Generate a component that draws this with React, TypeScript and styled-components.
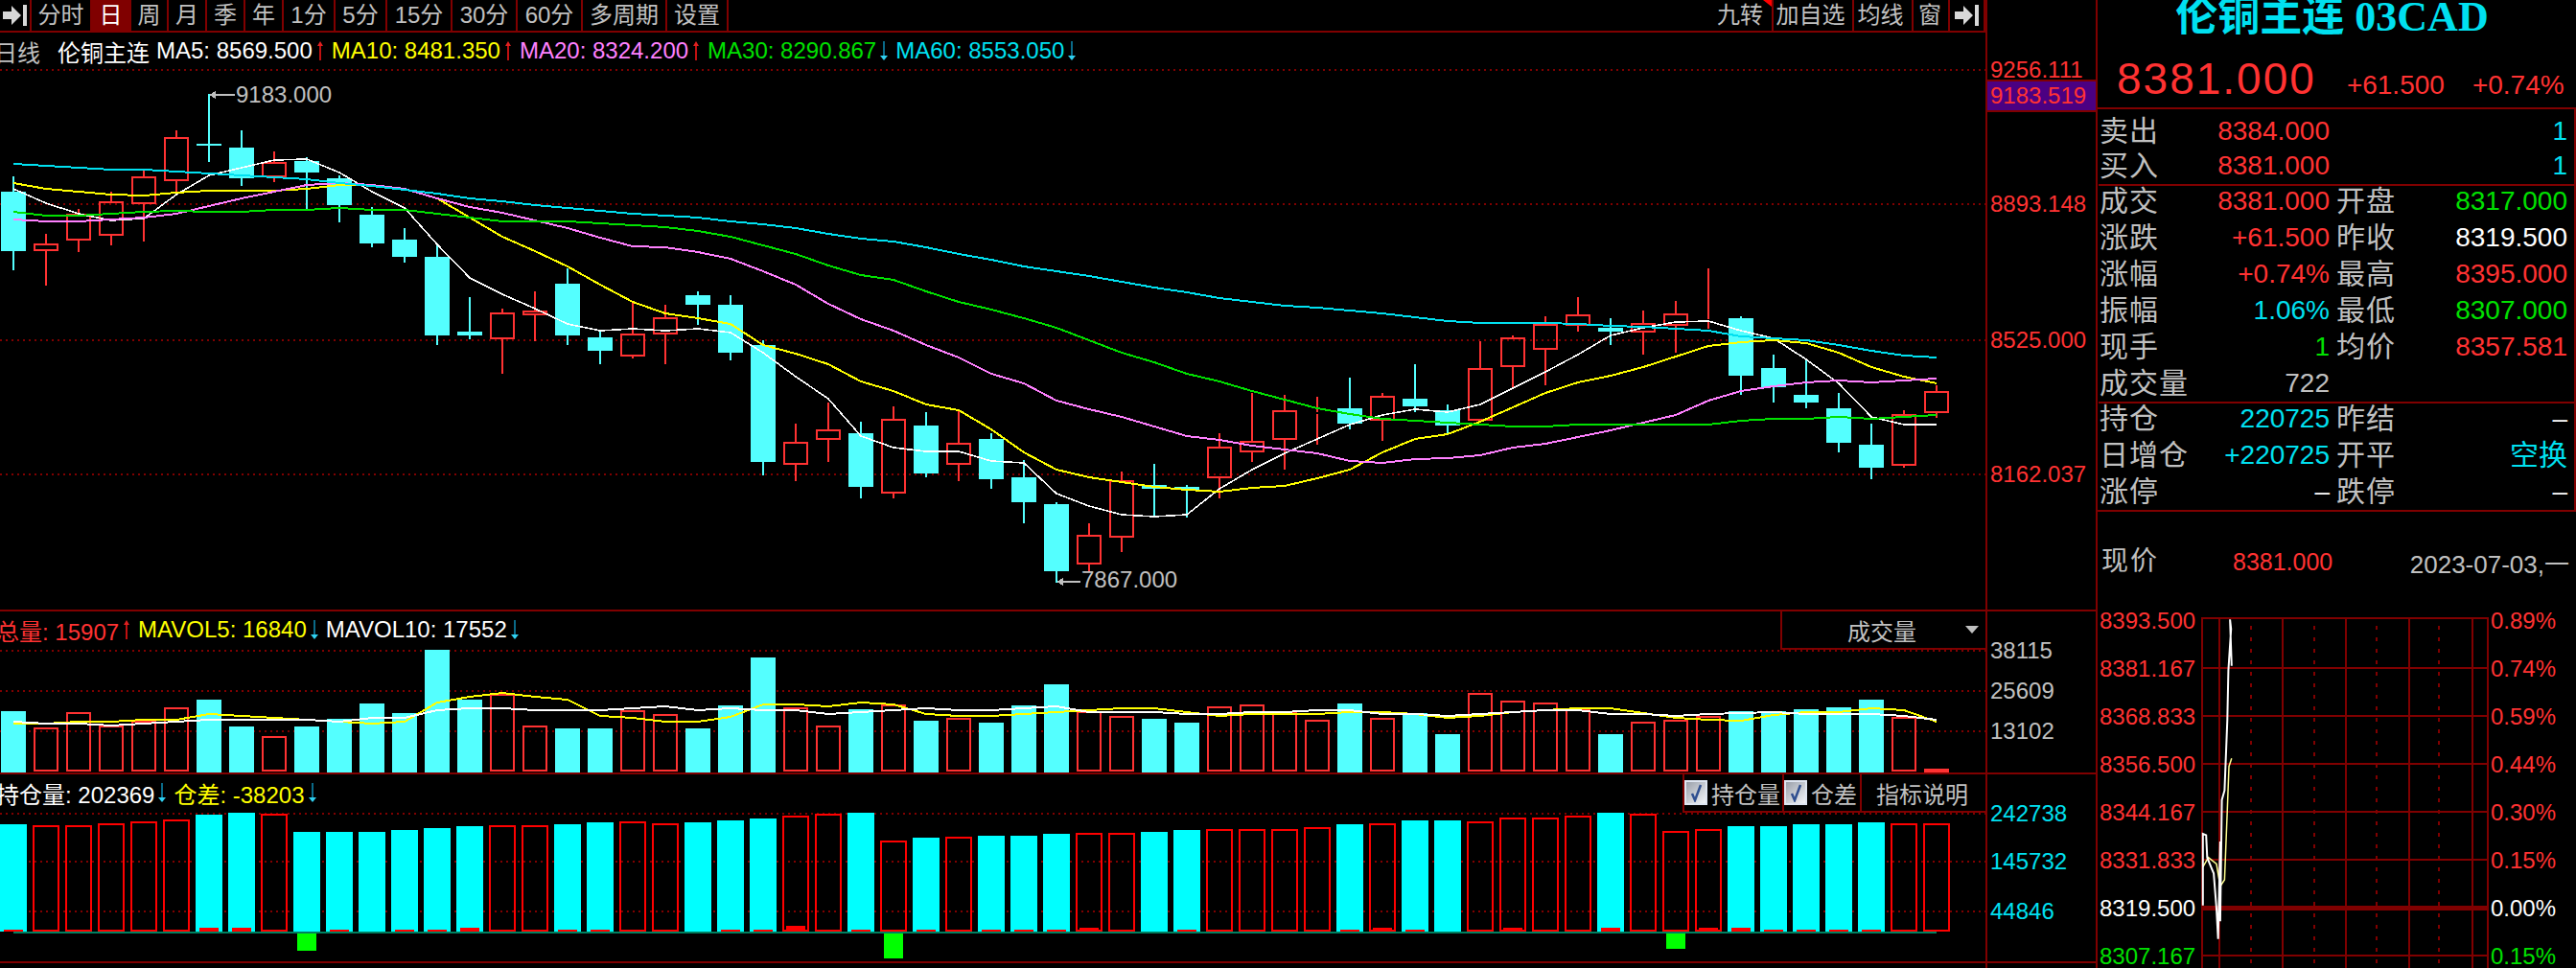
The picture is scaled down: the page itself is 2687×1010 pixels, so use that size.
import React from "react";
import styled, { createGlobalStyle } from "styled-components";

const SANS = `"Liberation Sans", "Noto Sans CJK SC", sans-serif`;
const LINE = "#800000";
const RED = "#ff3232";
const GRAY = "#c0c0c0";
const AQUA = "#00e0f0";
const GREEN = "#00e000";
const WHITE = "#ffffff";
const YELLOW = "#ffff00";
const PINK = "#ff80ff";

const Global = createGlobalStyle`
  html, body { margin: 0; padding: 0; background: #000; overflow: hidden; }
  #root { width: 2687px; height: 1010px; }
`;

const Screen = styled.div`
  width: 2687px;
  height: 1010px;
  display: flex;
  overflow: hidden;
  background: #000;
  color: ${GRAY};
  font-family: ${SANS};
  font-size: 24px;
`;

const LeftArea = styled.div`
  width: 2186px;
  flex: none;
  display: flex;
  flex-direction: column;
`;

const PaneRow = styled.div<{ $h: number }>`
  display: flex;
  height: ${(p) => p.$h}px;
  flex: none;
  box-sizing: border-box;
  border-bottom: 2px solid ${LINE};
`;

const ChartColumn = styled.div`
  width: 2071px;
  flex: none;
  display: flex;
  flex-direction: column;
  overflow: hidden;
`;

const AxisColumn = styled.div`
  width: 115px;
  flex: none;
  box-sizing: border-box;
  border-left: 2px solid ${LINE};
  display: flex;
  flex-direction: column;
`;

const FillerRow = styled.div`
  flex: 1;
  display: flex;
`;

const FillerLeft = styled.div`
  width: 2071px;
  flex: none;
`;

const AxisLabel = styled.div<{ $gap: number; $color: string }>`
  margin-top: ${(p) => p.$gap}px;
  height: 24px;
  line-height: 24px;
  padding-left: 3px;
  color: ${(p) => p.$color};
  white-space: nowrap;
`;

const CurrentBox = styled.div`
  margin-top: -2px;
  height: 34px;
  box-sizing: border-box;
  border-top: 2px solid ${LINE};
  border-bottom: 2px solid ${LINE};
  background: #4b0082;
  color: ${RED};
  line-height: 30px;
  padding-left: 3px;
`;

const Toolbar = styled.div`
  height: 34px;
  flex: none;
  display: flex;
  box-sizing: border-box;
  border-bottom: 2px solid ${LINE};
`;

const ToolSpacer = styled.div`
  flex: 1;
`;

const ToolButton = styled.div<{ $w: number; $active?: boolean; $nudge?: number }>`
  position: relative;
  width: ${(p) => p.$w}px;
  flex: none;
  box-sizing: border-box;
  border-right: 2px solid ${LINE};
  padding-right: ${(p) => p.$nudge ?? 0}px;
  display: flex;
  align-items: center;
  justify-content: center;
  background: ${(p) => (p.$active ? "#800000" : "transparent")};
  color: ${(p) => (p.$active ? "#ffffff" : GRAY)};
  font-size: 24px;
  line-height: 32px;
  white-space: nowrap;
`;

const CornerMark = styled.span`
  position: absolute;
  top: 0;
  right: 0;
  width: 0;
  height: 0;
  border-top: 7px solid #ff0000;
  border-left: 9px solid transparent;
`;

const LegendRow = styled.div<{ $h: number; $clip: number }>`
  height: ${(p) => p.$h}px;
  flex: none;
  display: flex;
  align-items: center;
  gap: 7px;
  margin-left: ${(p) => p.$clip}px;
  white-space: nowrap;
`;

const HeaderRow = styled.div`
  height: 40px;
  flex: none;
  display: flex;
  justify-content: space-between;
`;

const LegendItem = styled.span<{ $color: string; $after?: number }>`
  display: inline-flex;
  align-items: center;
  gap: 3px;
  color: ${(p) => p.$color};
  margin-right: ${(p) => p.$after ?? 0}px;
  font-size: 24px;
`;

const Dropdown = styled.div`
  width: 214px;
  height: 40px;
  flex: none;
  box-sizing: border-box;
  border-left: 2px solid ${LINE};
  border-bottom: 2px solid ${LINE};
  display: flex;
  align-items: center;
  padding-left: 68px;
`;

const DropdownCaret = styled.span`
  margin-left: 51px;
  width: 0;
  height: 0;
  border-left: 7px solid transparent;
  border-right: 7px solid transparent;
  border-top: 8px solid ${GRAY};
`;

const ToolGroup = styled.div`
  display: flex;
  height: 40px;
  flex: none;
  box-sizing: border-box;
  border-bottom: 2px solid ${LINE};
`;

const ToolCell = styled.div<{ $w: number; $pad: number }>`
  width: ${(p) => p.$w}px;
  box-sizing: border-box;
  border-left: 2px solid ${LINE};
  padding-left: ${(p) => p.$pad}px;
  display: flex;
  align-items: center;
  gap: 4px;
  white-space: nowrap;
`;

const CheckBox = styled.span`
  width: 24px;
  height: 26px;
  flex: none;
  box-sizing: border-box;
  border: 2px solid #dfe6f2;
  background: linear-gradient(135deg, #9aa0aa, #f2f4f8);
  display: flex;
  align-items: center;
  justify-content: center;
`;

const ChartSvg = styled.svg`
  display: block;
  flex: none;
`;

const ChartLabel = styled.text`
  font-family: ${SANS};
  font-size: 24px;
  fill: ${GRAY};
`;

const RightPanel = styled.div`
  width: 501px;
  flex: none;
  box-sizing: border-box;
  border-left: 2px solid ${LINE};
  display: flex;
  flex-direction: column;
`;

const QuoteHeader = styled.div`
  height: 114px;
  flex: none;
  box-sizing: border-box;
  border-bottom: 2px solid ${LINE};
`;

const Title = styled.div`
  height: 36px;
  text-align: center;
  padding-right: 10px;
  color: ${AQUA};
  font-family: "Liberation Serif", "Noto Sans CJK SC", serif;
  font-weight: 700;
  font-size: 44px;
  line-height: 36px;
  white-space: nowrap;
`;

const PriceRow = styled.div`
  display: flex;
  align-items: baseline;
  padding: 23px 0 0 20px;
  color: ${RED};
`;

const BigPrice = styled.span`
  font-size: 46px;
  line-height: 46px;
  letter-spacing: 2px;
`;

const PriceChange = styled.span<{ $gap: number }>`
  font-size: 28px;
  margin-left: ${(p) => p.$gap}px;
`;

const QuoteBox = styled.div`
  box-sizing: border-box;
  border-right: 2px solid ${LINE};
  display: flex;
  flex-direction: column;
`;

const QuoteSection = styled.div<{ $top: number; $bottom: number }>`
  margin-top: ${(p) => p.$top}px;
  padding-bottom: ${(p) => p.$bottom}px;
`;

const Divider = styled.div<{ $inset: number }>`
  height: 2px;
  flex: none;
  background: ${LINE};
  margin-left: ${(p) => p.$inset}px;
  position: relative;
  z-index: 1;
`;

const QuoteRow = styled.div<{ $h: number }>`
  height: ${(p) => p.$h}px;
  display: grid;
  grid-template-columns: 240px 241px;
  grid-template-rows: ${(p) => p.$h}px;
  column-gap: 7px;
  padding-left: 2px;
  align-items: center;
`;

const QuoteCell = styled.div`
  display: flex;
  align-items: center;
  justify-content: space-between;
  white-space: nowrap;
  line-height: 30px;
`;

const QuoteLabel = styled.span`
  font-size: 30px;
  line-height: 30px;
  letter-spacing: 1px;
  color: ${GRAY};
`;

const QuoteValue = styled.span<{ $color: string }>`
  font-size: 28px;
  line-height: 30px;
  color: ${(p) => p.$color};
`;

const QuoteWord = styled.span`
  font-size: 30px;
  line-height: 30px;
  color: ${AQUA};
`;

const NowRow = styled.div`
  display: flex;
  align-items: center;
  height: 30px;
  margin-top: 37px;
  padding: 0 7px 0 4px;
  white-space: nowrap;
`;

const NowLabel = styled.span`
  width: 137px;
  font-size: 28px;
  line-height: 30px;
  letter-spacing: 2px;
`;

const NowPrice = styled.span`
  color: ${RED};
  font-size: 25px;
`;

const NowDate = styled.span`
  margin-left: auto;
  font-size: 26px;
  color: ${GRAY};
`;

const Intraday = styled.div`
  display: flex;
  margin-top: 21px;
  height: 400px;
  flex: none;
`;

const ScaleColumn = styled.div<{ $w: number; $pad: number }>`
  width: ${(p) => p.$w}px;
  flex: none;
  box-sizing: border-box;
  padding-left: ${(p) => p.$pad}px;
  padding-top: 1px;
`;

const ScaleLabel = styled.div<{ $color: string }>`
  height: 50px;
  line-height: 50px;
  color: ${(p) => p.$color};
  white-space: nowrap;
`;

/* ---------- data ---------- */

const cx = (i: number) => 14 + 34 * i;

type Candle = [number, number, number, number, "r" | "c"];

const candles: Candle[] = [
  [200, 262, 184, 282, "c"], [254, 262, 244, 298, "r"], [223, 251, 218, 263, "r"], [210, 246, 200, 256, "r"],
  [184, 213, 178, 252, "r"], [143, 189, 136, 200, "r"], [150, 152, 98, 169, "c"], [154, 186, 136, 194, "c"],
  [169, 185, 158, 190, "r"], [168, 180, 164, 218, "c"], [186, 214, 183, 232, "c"], [224, 254, 216, 258, "c"],
  [250, 268, 238, 274, "c"], [268, 350, 255, 360, "c"], [346, 350, 310, 354, "c"], [326, 354, 322, 390, "r"],
  [324, 329, 304, 356, "r"], [296, 350, 280, 360, "c"], [352, 366, 346, 380, "c"], [348, 372, 315, 374, "r"],
  [331, 349, 318, 380, "r"], [308, 318, 304, 339, "c"], [318, 368, 308, 376, "c"], [360, 482, 355, 496, "c"],
  [461, 485, 442, 502, "r"], [448, 459, 420, 482, "r"], [452, 508, 440, 520, "c"], [437, 515, 424, 520, "r"],
  [444, 494, 430, 498, "c"], [462, 485, 428, 502, "r"], [458, 500, 452, 510, "c"], [498, 524, 480, 546, "c"],
  [526, 596, 524, 608, "c"], [558, 589, 546, 597, "r"], [501, 561, 492, 576, "r"], [506, 510, 484, 539, "c"],
  [508, 511, 506, 540, "c"], [466, 499, 452, 520, "r"], [460, 472, 410, 482, "r"], [428, 459, 412, 490, "r"],
  [430, 432, 414, 464, "r"], [426, 442, 394, 448, "c"], [413, 439, 410, 460, "r"], [416, 424, 380, 430, "c"],
  [428, 444, 422, 452, "c"], [384, 439, 356, 440, "r"], [352, 383, 350, 406, "r"], [338, 365, 330, 402, "r"],
  [328, 340, 310, 346, "r"], [342, 346, 332, 360, "c"], [337, 347, 324, 370, "r"], [327, 340, 314, 368, "r"],
  [333, 335, 280, 343, "r"], [332, 392, 330, 412, "c"], [384, 404, 370, 420, "c"], [412, 420, 376, 426, "c"],
  [426, 462, 410, 472, "c"], [464, 488, 442, 500, "c"], [432, 486, 428, 488, "r"], [408, 431, 402, 436, "r"],
];

const ma5 = [197,212,223,230,228,203,183,175,167,166,180,200,217,255,290,307,322,338,345,343,345,343,347,368,393,416,455,467,471,471,481,483,515,528,537,539,537,510,490,473,458,443,433,427,430,422,405,388,370,350,342,336,335,345,353,375,400,435,443,443];
const ma10 = [191,197,200,203,204,201,199,199,199,197,193,193,197,207,227,247,262,278,297,315,327,332,338,360,369,380,398,408,422,428,448,472,490,498,503,508,511,513,509,507,499,490,472,458,453,440,425,410,399,392,383,372,361,357,355,358,368,383,393,400];
const ma20 = [229,231,231,229,227,223,215,207,200,193,191,193,197,207,216,222,230,238,248,257,258,263,270,283,297,317,333,345,360,373,390,400,418,427,435,445,455,459,465,469,473,481,483,479,478,475,467,463,456,449,441,433,418,408,403,399,397,399,397,395];
const ma30 = [221,225,225,223,221,220,221,221,219,219,217,219,219,223,227,231,231,231,233,235,237,241,247,256,265,277,287,292,304,315,323,332,342,355,368,378,390,398,408,417,426,432,437,439,441,443,445,445,443,443,443,443,443,439,437,437,435,437,435,433];
const ma60 = [171,173,175,177,177,179,181,183,185,187,191,194,198,202,207,210,214,217,220,223,225,227,231,234,238,244,249,252,258,265,271,278,283,288,294,300,305,311,315,319,321,324,327,331,335,337,337,337,338,340,341,343,345,351,353,355,360,366,371,373];

const volTops = [742,759,743,757,752,738,730,758,768,758,750,734,744,678,730,724,757,760,760,741,745,760,736,686,738,757,740,735,752,749,754,736,714,742,747,750,754,737,735,743,751,734,749,744,766,723,731,733,740,766,753,751,747,742,742,740,738,730,748,802];
const volMa5 = [755,755,753,753,751,751,745,747,749,751,753,755,753,733,727,723,727,730,747,749,753,753,748,735,735,737,733,735,745,747,747,745,743,741,739,739,743,747,745,745,745,743,743,745,749,747,743,741,739,739,744,749,751,752,746,743,743,739,741,753];
const volMa10 = [753,755,755,757,755,753,751,751,751,751,753,749,749,741,739,739,741,741,741,739,737,741,739,741,741,745,743,741,739,741,741,739,737,743,743,743,745,745,743,743,741,741,745,745,747,745,743,741,741,745,745,747,745,744,743,745,745,745,747,751];

const oiTops = [860,861,861,859,857,855,850,848,849,868,868,868,866,864,862,861,861,860,858,857,859,858,856,854,851,849,848,877,874,873,872,872,870,869,869,868,866,865,865,865,863,860,859,856,856,857,853,853,851,848,849,867,865,862,862,860,860,858,859,859];
const oiKinds = "crrrrrccrccccccrrccrrcccrrcrcrcccrrccrrrrcrccrrrrcrrrcccccrr";
const oiTicks = [2,2,2,2,2,2,4,4,2,0,2,0,2,2,4,2,2,2,2,2,2,0,2,2,6,2,2,0,2,2,2,2,2,4,2,0,2,2,2,2,2,2,4,2,0,2,4,2,2,4,2,0,4,4,2,2,2,2,2,2];
const oiDiff = [[9, 18], [27, 26], [51, 16]];

const points = (ys: number[]) => ys.map((y, i) => `${cx(i)},${y}`).join(" ");

const Wick = ({ x, a, b, color }: { x: number; a: number; b: number; color: string }) =>
  b > a ? <rect x={x - 1} y={a} width={2} height={b - a} fill={color} /> : null;

const DotLine = ({ y, x2 = 2071 }: { y: number; x2?: number }) => (
  <line x1={0} x2={x2} y1={y} y2={y} stroke={LINE} strokeWidth={2} strokeDasharray="2 4" />
);

const Pointer = ({ x, y, len }: { x: number; y: number; len: number }) => (
  <g fill="#c0c0c0">
    <rect x={x + 5} y={y - 1} width={len - 5} height={2} />
    <polygon points={`${x},${y} ${x + 7},${y - 4} ${x + 7},${y + 4}`} />
  </g>
);

const MainChart = () => (
  <ChartSvg width={2071} height={564} viewBox="0 72 2071 564" shapeRendering="crispEdges">
    <DotLine y={73} />
    <DotLine y={213} />
    <DotLine y={355} />
    <DotLine y={495} />
    {candles.map(([top, bottom, high, low, kind], i) => {
      const x = cx(i);
      const color = kind === "r" ? RED : "#54ffff";
      return (
        <g key={i}>
          <Wick x={x} a={high} b={top} color={color} />
          <Wick x={x} a={bottom} b={low} color={color} />
          {kind === "r" ? (
            <rect x={x - 12} y={top + 1} width={24} height={Math.max(bottom - top - 2, 0)} fill="none" stroke={color} strokeWidth={2} />
          ) : (
            <rect x={x - 13} y={top} width={26} height={bottom - top} fill={color} />
          )}
        </g>
      );
    })}
    <polyline points={points(ma5)} fill="none" stroke={WHITE} strokeWidth={1.6} />
    <polyline points={points(ma10)} fill="none" stroke={YELLOW} strokeWidth={2} />
    <polyline points={points(ma20)} fill="none" stroke={PINK} strokeWidth={2} />
    <polyline points={points(ma30)} fill="none" stroke="#00e000" strokeWidth={2} />
    <polyline points={points(ma60)} fill="none" stroke="#00e0f0" strokeWidth={2} />
    <Pointer x={218} y={99} len={27} />
    <ChartLabel x={246} y={107}>9183.000</ChartLabel>
    <Pointer x={1102} y={607} len={25} />
    <ChartLabel x={1128} y={613}>7867.000</ChartLabel>
  </ChartSvg>
);

const VolumeChart = () => (
  <ChartSvg width={2071} height={128} viewBox="0 678 2071 128" shapeRendering="crispEdges">
    <DotLine y={679} />
    <DotLine y={721} />
    <DotLine y={763} />
    {volTops.map((top, i) => {
      const x = cx(i);
      const red = candles[i][4] === "r";
      if (i === 59) return <rect key={i} x={x - 13} y={top} width={26} height={806 - top} fill={RED} />;
      return red ? (
        <rect key={i} x={x - 12} y={top + 1} width={24} height={805 - top - 2} fill="none" stroke={RED} strokeWidth={2} />
      ) : (
        <rect key={i} x={x - 13} y={top} width={26} height={806 - top} fill="#54ffff" />
      );
    })}
    <polyline points={points(volMa5)} fill="none" stroke={YELLOW} strokeWidth={2} />
    <polyline points={points(volMa10)} fill="none" stroke={WHITE} strokeWidth={2} />
  </ChartSvg>
);

const OpenInterestChart = () => (
  <ChartSvg width={2071} height={155} viewBox="0 848 2071 155" shapeRendering="crispEdges">
    <DotLine y={849} />
    <DotLine y={899} />
    <DotLine y={951} />
    {oiTops.map((top, i) => {
      const x = cx(i);
      return oiKinds[i] === "r" ? (
        <rect key={i} x={x - 13} y={top + 1} width={26} height={972 - top - 2} fill="none" stroke="#ff0000" strokeWidth={2} />
      ) : (
        <rect key={i} x={x - 14} y={top} width={28} height={972 - top} fill="#00ffff" />
      );
    })}
    {oiTicks.map((h, i) =>
      h ? <rect key={i} x={cx(i) - 10} y={972 - h} width={20} height={h} fill="#ff0000" /> : null
    )}
    <rect x={14} y={972} width={2006} height={2} fill="#008060" />
    {oiDiff.map(([i, h]) => (
      <rect key={i} x={cx(i) - 10} y={974} width={20} height={h} fill="#00ff00" />
    ))}
  </ChartSvg>
);

const gridY = [699, 749, 799, 849, 899, 999];
const gridX = [2296, 2314, 2380, 2446, 2512, 2578, 2594];
const dotX = [2348, 2414, 2479, 2544];

const toPlot = (pts: number[][]) => pts.map(([d, y]) => `${(1800 + d * 0.5657).toFixed(1)},${620 + y / 3}`).join(" ");

const whiteTrace = [[880,980],[880,756],[886,760],[888,830],[895,860],[900,880],[905,990],[908,1085],[912,780],[912,1030],[915,650],[920,620],[925,400],[927,245],[932,115],[930,85],[933,230]];
const paleTrace = [[880,860],[890,830],[905,850],[912,920],[920,900],[925,680],[928,545],[933,520]];

const IntradayChart = () => (
  <ChartSvg width={300} height={400} viewBox="2296 624 300 400">
    <g shapeRendering="crispEdges">
      <line x1={2296} x2={2596} y1={647} y2={647} stroke={LINE} strokeWidth={2} />
      {gridY.map((y) => (
        <line key={y} x1={2296} x2={2596} y1={y} y2={y} stroke={LINE} strokeWidth={2} />
      ))}
      <rect x={2296} y={947} width={300} height={5} fill={LINE} />
      {gridX.map((x) => (
        <line key={x} x1={x + 1} x2={x + 1} y1={647} y2={1024} stroke={LINE} strokeWidth={2} />
      ))}
      {dotX.map((x) => (
        <line key={x} x1={x} x2={x} y1={655} y2={1024} stroke={LINE} strokeWidth={2} strokeDasharray="4 8" />
      ))}
    </g>
    <polyline points={toPlot(paleTrace)} fill="none" stroke="#ffff90" strokeWidth={1.5} />
    <polyline points={toPlot(whiteTrace)} fill="none" stroke="#ffffff" strokeWidth={2} />
  </ChartSvg>
);

/* ---------- small drawings ---------- */

const Trend = ({ up }: { up?: boolean }) => (
  <svg width={10} height={20} viewBox="0 0 10 20" style={{ display: "block", flex: "none" }}>
    {up ? (
      <>
        <rect x={4} y={3} width={2} height={17} fill="#c01010" />
        <polygon points="5,0 8,5 2,5" fill="#e02020" />
      </>
    ) : (
      <>
        <rect x={4} y={0} width={2} height={16} fill="#0a6a88" />
        <polygon points="5,20 1,15 9,15" fill="#30d0f0" />
      </>
    )}
  </svg>
);

const Collapse = () => (
  <svg width={26} height={22} viewBox="0 0 26 22" style={{ display: "block" }}>
    <polygon points="0,7 9,7 9,1 19,11 9,21 9,15 0,15" fill="#d8d8d8" />
    <rect x={21} y={0} width={4} height={22} fill="#d8d8d8" />
  </svg>
);

const Check = () => (
  <svg width={14} height={20} viewBox="0 0 14 20" style={{ display: "block" }}>
    <path d="M3 11 L6 18 L12 2" fill="none" stroke="#2f4f90" strokeWidth={2.5} />
  </svg>
);

const MA_ITEMS: [string, string, boolean][] = [
  ["MA5: 8569.500", WHITE, true],
  ["MA10: 8481.350", YELLOW, true],
  ["MA20: 8324.200", PINK, true],
  ["MA30: 8290.867", GREEN, false],
  ["MA60: 8553.050", AQUA, false],
];

const LEFT_TOOLS: [string, number][] = [
  ["分时", 63], ["周", 39], ["月", 40], ["季", 40], ["年", 40], ["1分", 54], ["5分", 54],
  ["15分", 68], ["30分", 68], ["60分", 68], ["多周期", 88], ["设置", 64],
];

const QUOTES_A: [string, string, string, string, string, string][] = [
  ["成交", "8381.000", RED, "开盘", "8317.000", GREEN],
  ["涨跌", "+61.500", RED, "昨收", "8319.500", WHITE],
  ["涨幅", "+0.74%", RED, "最高", "8395.000", RED],
  ["振幅", "1.06%", AQUA, "最低", "8307.000", GREEN],
  ["现手", "1", GREEN, "均价", "8357.581", RED],
];

const QUOTES_B: [string, string, string, string, string, string][] = [
  ["持仓", "220725", AQUA, "昨结", "–", WHITE],
  ["日增仓", "+220725", AQUA, "开平", "空换", AQUA],
  ["涨停", "–", WHITE, "跌停", "–", WHITE],
];

const SCALE_LEFT: [string, string][] = [
  ["8393.500", RED], ["8381.167", RED], ["8368.833", RED], ["8356.500", RED],
  ["8344.167", RED], ["8331.833", RED], ["8319.500", WHITE], ["8307.167", GREEN],
];

const SCALE_RIGHT: [string, string][] = [
  ["0.89%", RED], ["0.74%", RED], ["0.59%", RED], ["0.44%", RED],
  ["0.30%", RED], ["0.15%", RED], ["0.00%", WHITE], ["0.15%", GREEN],
];

export default function App() {
  return (
    <>
      <Global />
      <Screen>
        <LeftArea>
          <PaneRow $h={638}>
            <ChartColumn>
              <Toolbar>
                <ToolButton $w={33}><Collapse /></ToolButton>
                {LEFT_TOOLS.slice(0, 1).map(([t, w]) => <ToolButton key={t} $w={w}>{t}</ToolButton>)}
                <ToolButton $w={41} $active>日</ToolButton>
                {LEFT_TOOLS.slice(1).map(([t, w]) => <ToolButton key={t} $w={w}>{t}</ToolButton>)}
                <ToolSpacer />
                <ToolButton $w={62} $nudge={6}>九转<CornerMark /></ToolButton>
                <ToolButton $w={84} $nudge={5}>加自选</ToolButton>
                <ToolButton $w={62} $nudge={5}>均线</ToolButton>
                <ToolButton $w={38} $nudge={2}>窗</ToolButton>
                <ToolButton $w={37}><Collapse /></ToolButton>
              </Toolbar>
              <LegendRow $h={38} $clip={-6}>
                <LegendItem $color={GRAY} $after={11}>日线</LegendItem>
                <LegendItem $color={WHITE}>伦铜主连</LegendItem>
                {MA_ITEMS.map(([t, c, up]) => (
                  <LegendItem key={t} $color={c}>{t}<Trend up={up} /></LegendItem>
                ))}
              </LegendRow>
              <MainChart />
            </ChartColumn>
            <AxisColumn>
              <AxisLabel $gap={61} $color={RED}>9256.111</AxisLabel>
              <CurrentBox>9183.519</CurrentBox>
              <AxisLabel $gap={84} $color={RED}>8893.148</AxisLabel>
              <AxisLabel $gap={118} $color={RED}>8525.000</AxisLabel>
              <AxisLabel $gap={116} $color={RED}>8162.037</AxisLabel>
            </AxisColumn>
          </PaneRow>

          <PaneRow $h={170}>
            <ChartColumn>
              <HeaderRow>
                <LegendRow $h={38} $clip={-4}>
                  <LegendItem $color={RED}>总量: 15907<Trend up /></LegendItem>
                  <LegendItem $color={YELLOW}>MAVOL5: 16840<Trend /></LegendItem>
                  <LegendItem $color={WHITE}>MAVOL10: 17552<Trend /></LegendItem>
                </LegendRow>
                <Dropdown>成交量<DropdownCaret /></Dropdown>
              </HeaderRow>
              <VolumeChart />
            </ChartColumn>
            <AxisColumn>
              <AxisLabel $gap={29} $color={GRAY}>38115</AxisLabel>
              <AxisLabel $gap={18} $color={GRAY}>25609</AxisLabel>
              <AxisLabel $gap={18} $color={GRAY}>13102</AxisLabel>
            </AxisColumn>
          </PaneRow>

          <PaneRow $h={197}>
            <ChartColumn>
              <HeaderRow>
                <LegendRow $h={38} $clip={-4}>
                  <LegendItem $color={WHITE}>持仓量: 202369<Trend /></LegendItem>
                  <LegendItem $color={YELLOW}>仓差: -38203<Trend /></LegendItem>
                </LegendRow>
                <ToolGroup>
                  <ToolCell $w={104} $pad={0}><CheckBox><Check /></CheckBox>持仓量</ToolCell>
                  <ToolCell $w={81} $pad={0}><CheckBox><Check /></CheckBox>仓差</ToolCell>
                  <ToolCell $w={131} $pad={15}>指标说明</ToolCell>
                </ToolGroup>
              </HeaderRow>
              <OpenInterestChart />
            </ChartColumn>
            <AxisColumn>
              <AxisLabel $gap={29} $color={AQUA}>242738</AxisLabel>
              <AxisLabel $gap={26} $color={AQUA}>145732</AxisLabel>
              <AxisLabel $gap={28} $color={AQUA}>44846</AxisLabel>
            </AxisColumn>
          </PaneRow>

          <FillerRow>
            <FillerLeft />
            <AxisColumn />
          </FillerRow>
        </LeftArea>

        <RightPanel>
          <QuoteHeader>
            <Title>伦铜主连 03CAD</Title>
            <PriceRow>
              <BigPrice>8381.000</BigPrice>
              <PriceChange $gap={32}>+61.500</PriceChange>
              <PriceChange $gap={29}>+0.74%</PriceChange>
            </PriceRow>
          </QuoteHeader>
          <QuoteBox>
            <QuoteSection $top={5} $bottom={1}>
              <QuoteRow $h={36}>
                <QuoteCell><QuoteLabel>卖出</QuoteLabel><QuoteValue $color={RED}>8384.000</QuoteValue></QuoteCell>
                <QuoteCell><span /><QuoteValue $color={AQUA}>1</QuoteValue></QuoteCell>
              </QuoteRow>
              <QuoteRow $h={36}>
                <QuoteCell><QuoteLabel>买入</QuoteLabel><QuoteValue $color={RED}>8381.000</QuoteValue></QuoteCell>
                <QuoteCell><span /><QuoteValue $color={AQUA}>1</QuoteValue></QuoteCell>
              </QuoteRow>
            </QuoteSection>
            <Divider $inset={1} />
            <QuoteSection $top={-3} $bottom={0}>
              {QUOTES_A.map(([a, av, ac, b, bv, bc]) => (
                <QuoteRow key={a} $h={38}>
                  <QuoteCell><QuoteLabel>{a}</QuoteLabel><QuoteValue $color={ac}>{av}</QuoteValue></QuoteCell>
                  <QuoteCell><QuoteLabel>{b}</QuoteLabel><QuoteValue $color={bc}>{bv}</QuoteValue></QuoteCell>
                </QuoteRow>
              ))}
              <QuoteRow $h={38}>
                <QuoteCell><QuoteLabel>成交量</QuoteLabel><QuoteValue $color={GRAY}>722</QuoteValue></QuoteCell>
                <QuoteCell />
              </QuoteRow>
            </QuoteSection>
            <Divider $inset={1} />
            <QuoteSection $top={-3} $bottom={0}>
              {QUOTES_B.map(([a, av, ac, b, bv, bc]) => (
                <QuoteRow key={a} $h={38}>
                  <QuoteCell><QuoteLabel>{a}</QuoteLabel><QuoteValue $color={ac}>{av}</QuoteValue></QuoteCell>
                  <QuoteCell>
                    <QuoteLabel>{b}</QuoteLabel>
                    {bv === "空换" ? <QuoteWord>{bv}</QuoteWord> : <QuoteValue $color={bc}>{bv}</QuoteValue>}
                  </QuoteCell>
                </QuoteRow>
              ))}
            </QuoteSection>
          </QuoteBox>
          <Divider $inset={0} />
          <NowRow>
            <NowLabel>现价</NowLabel>
            <NowPrice>8381.000</NowPrice>
            <NowDate>2023-07-03,一</NowDate>
          </NowRow>
          <Intraday>
            <ScaleColumn $w={108} $pad={2}>
              {SCALE_LEFT.map(([t, c]) => <ScaleLabel key={t} $color={c}>{t}</ScaleLabel>)}
            </ScaleColumn>
            <IntradayChart />
            <ScaleColumn $w={91} $pad={2}>
              {SCALE_RIGHT.map(([t, c], i) => <ScaleLabel key={i} $color={c}>{t}</ScaleLabel>)}
            </ScaleColumn>
          </Intraday>
        </RightPanel>
      </Screen>
    </>
  );
}
